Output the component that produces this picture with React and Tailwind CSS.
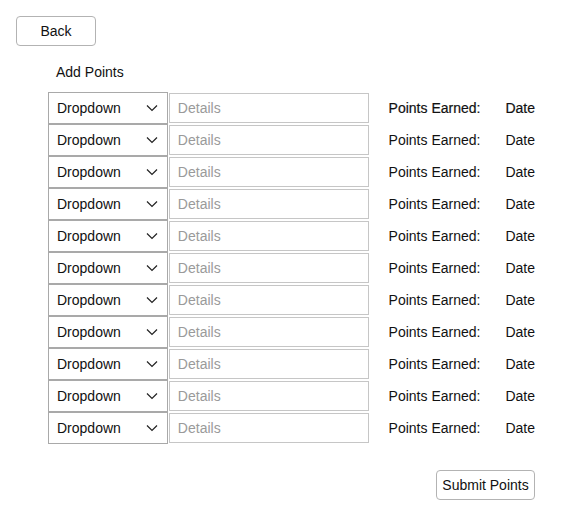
import React from "react";

const rows = Array.from({ length: 11 }, (_, i) => i);

const Chevron = () => (
  <svg width="12" height="8" viewBox="0 0 12 8" fill="none" className="mr-[9px]">
    <polyline points="1,1.5 6,6.5 11,1.5" stroke="#222" strokeWidth="1.2" />
  </svg>
);

const Row = ({ header }) => (
  <div className="flex h-8 items-center">
    <div className="flex h-8 w-[120px] items-center justify-between border border-[#a9a9a9] bg-white pl-2 text-[#111]">
      <span>Dropdown</span>
      <Chevron />
    </div>
    <input
      placeholder="Details"
      className="ml-px h-[30px] w-[200px] border border-[#c6c6c6] pl-2 text-sm outline-none placeholder:text-[#9a9a9a]"
    />
    <span
      className={
        "ml-5 w-[117px] text-[#111] " +
        (header ? "[-webkit-text-stroke:0.2px_#111]" : "")
      }
    >
      Points Earned:
    </span>
    <span className={"text-[#111] " + (header ? "[-webkit-text-stroke:0.2px_#111]" : "")}>
      Date
    </span>
  </div>
);

export default function App() {
  return (
    <div className="min-h-screen bg-white p-4 text-sm font-['Liberation_Sans',Arial,sans-serif] text-[#111]">
      <button className="h-[30px] w-20 rounded-[4px] border border-[#b3b3b3] bg-white text-sm">
        Back
      </button>
      <div className="mt-4 ml-10 leading-5">Add Points</div>
      <div className="mt-[10px] ml-8 w-[487px]">
        {rows.map((i) => (
          <Row key={i} header={i === 0} />
        ))}
        <div className="mt-[26px] flex justify-end">
          <button className="h-[30px] w-[99px] rounded-[4px] border border-[#b3b3b3] bg-white text-sm">
            Submit Points
          </button>
        </div>
      </div>
    </div>
  );
}
